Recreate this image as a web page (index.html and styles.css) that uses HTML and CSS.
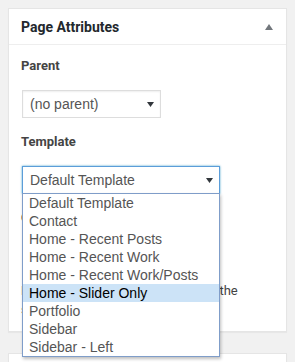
FILE: index.html
```html
<!DOCTYPE html>
<html lang="en">
<head>
    <meta charset="UTF-8">
    <meta name="viewport" content="width=device-width, initial-scale=1.0">
    <title>Page Attributes</title>
    <link rel="stylesheet" href="styles.css">
</head>
<body>
    <div class="postbox">
        <div class="postbox-header">
            <h2 class="postbox-title">Page Attributes</h2>
            <svg class="toggle" width="8" height="6" viewBox="0 0 8 6"><path d="M4 0L8 6H0z"/></svg>
        </div>
        <div class="inside">
            <p class="field-label">Parent</p>
            <div class="select parent-select">
                <span>(no parent)</span>
                <svg class="arrow" width="7" height="5" viewBox="0 0 7 5"><path d="M0 0H7L3.5 5z"/></svg>
            </div>

            <p class="field-label">Template</p>
            <div class="select-wrap">
                <div class="select template-select">
                    <span>Default Template</span>
                    <svg class="arrow" width="7" height="5" viewBox="0 0 7 5"><path d="M0 0H7L3.5 5z"/></svg>
                </div>
                <!-- open dropdown list -->
                <ul class="options">
                    <li>Default Template</li>
                    <li>Contact</li>
                    <li>Home - Recent Posts</li>
                    <li>Home - Recent Work</li>
                    <li>Home - Recent Work/Posts</li>
                    <li class="active">Home - Slider Only</li>
                    <li>Portfolio</li>
                    <li>Sidebar</li>
                    <li>Sidebar - Left</li>
                </ul>
            </div>

            <p class="field-label">Order</p>
            <div class="order-input">0</div>
            <p class="help">Need help? Use the Help tab above the screen title.</p>
        </div>
    </div>

    <div class="postbox next-box"></div>
</body>
</html>
```

FILE: styles.css
```css
html, body {
    height: 100%;
}
body {
    margin: 0;
    padding: 8px;
    box-sizing: border-box;
    background: #f1f1f1;
    font-family: Roboto, "Liberation Sans", sans-serif;
    color: #444;
    overflow: hidden;
}
.postbox {
    background: #fff;
    border: 1px solid #e5e5e5;
    box-shadow: 0 1px 1px rgba(0,0,0,0.04);
}
.postbox-header {
    display: flex;
    align-items: center;
    justify-content: space-between;
    height: 35px;
    padding: 0 13px 0 12px;
    border-bottom: 1px solid #eee;
}
.postbox-title {
    margin: 0;
    font-size: 14px;
    font-weight: bold;
    color: #23282d;
}
.toggle {
    fill: #72777c;
    margin-top: 1px;
}
.inside {
    padding: 12px 12px 12px 12px;
}
.field-label {
    margin: 0 0 15px;
    font-size: 13px;
    font-weight: bold;
    line-height: 18px;
    color: #444;
}
.select {
    display: flex;
    align-items: center;
    justify-content: space-between;
    box-sizing: border-box;
    height: 28px;
    padding: 0 6px 0 7px;
    margin: 0 0 15px 1px;
    border: 1px solid #ddd;
    box-shadow: inset 0 1px 2px rgba(0,0,0,0.07);
    font-family: "Liberation Sans", Arial, sans-serif;
    font-size: 14px;
    color: #555;
}
.arrow {
    fill: #32373c;
}
.parent-select {
    width: 139px;
}
.select-wrap {
    position: relative;
}
.template-select {
    width: 198px;
    border-color: #5b9dd9;
    box-shadow: 0 0 2px rgba(30,140,190,0.8);
}
.options {
    position: absolute;
    top: 27px;
    left: 1px;
    z-index: 2;
    width: 198px;
    box-sizing: border-box;
    margin: 0;
    padding: 0;
    list-style: none;
    background: #fff;
    border: 1px solid #7f9dc9;
    box-shadow: 1px 2px 3px rgba(0,0,0,0.25);
    font-family: "Liberation Sans", Arial, sans-serif;
    font-size: 14px;
    color: #555;
}
.options li {
    height: 18px;
    line-height: 18px;
    padding-left: 6px;
}
.options .active {
    background: #cce3f7;
    color: #000;
}
.order-input {
    width: 60px;
    height: 28px;
    box-sizing: border-box;
    border: 1px solid #ddd;
    margin: 0 0 11px 1px;
    padding: 0 6px;
    font-size: 14px;
    line-height: 26px;
}
.help {
    margin: 0;
    font-size: 13px;
    line-height: 19px;
    letter-spacing: -0.16px;
    color: #444;
}
.next-box {
    margin-top: 21px;
    height: 40px;
}
```
